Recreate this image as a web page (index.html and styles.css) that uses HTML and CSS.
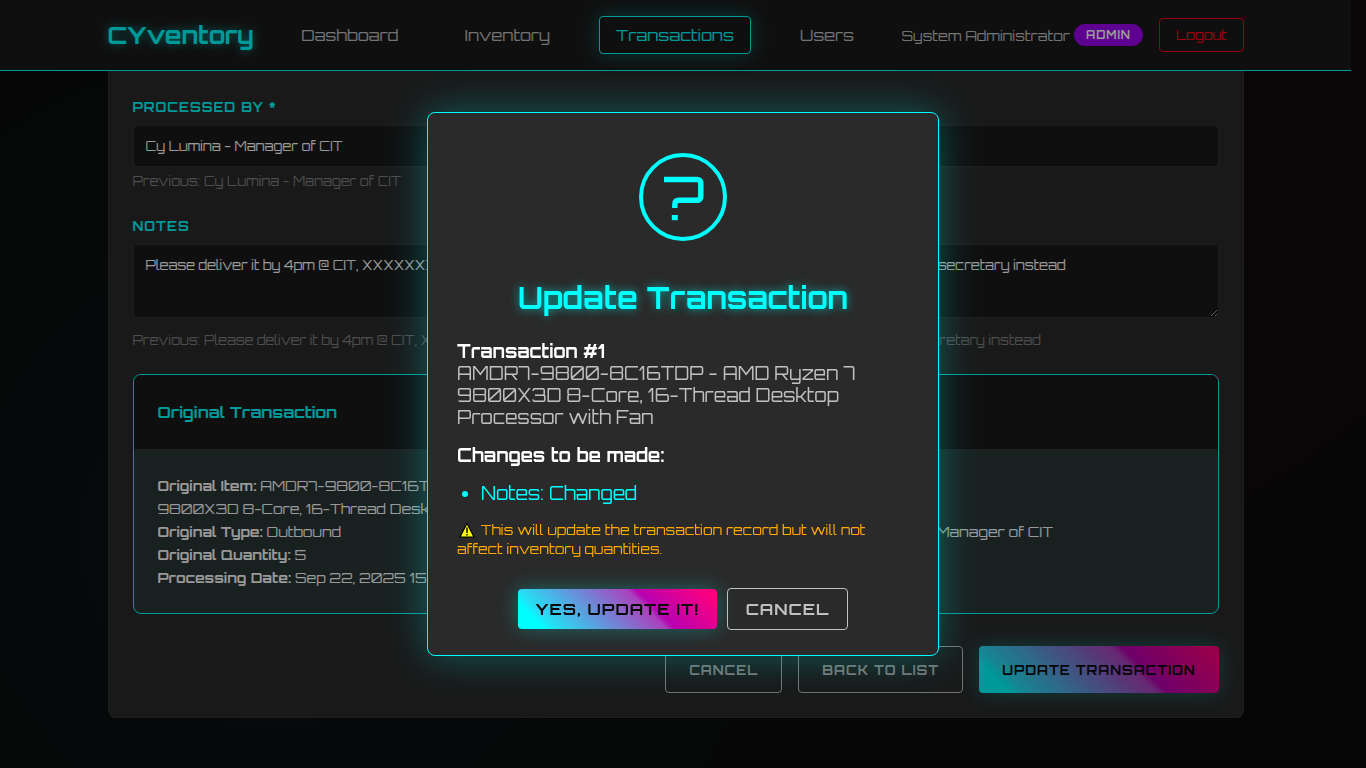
FILE: index.html
```html
<!DOCTYPE html>
<html lang="en">
<head>
<meta charset="utf-8">
<title>CYventory - Update Transaction</title>
<link rel="stylesheet" href="styles.css">
</head>
<body>
<header class="topbar">
  <div class="topbar-inner">
    <a class="logo" href="#">CYventory</a>
    <nav class="nav">
      <a class="nav-link" href="#">Dashboard</a>
      <a class="nav-link" href="#">Inventory</a>
      <a class="nav-link active" href="#">Transactions</a>
      <a class="nav-link" href="#">Users</a>
    </nav>
    <div class="user">
      <div class="user-info">System Administrator <span class="badge">ADMIN</span></div>
      <button class="logout" type="button">Logout</button>
    </div>
  </div>
</header>

<main class="page">
  <form class="card">
    <div class="field">
      <label class="label" for="processed">PROCESSED BY *</label>
      <input class="control" id="processed" type="text" value="Cy Lumina - Manager of CIT">
      <small class="previous">Previous: Cy Lumina - Manager of CIT</small>
    </div>
    <div class="field">
      <label class="label" for="notes">NOTES</label>
      <textarea class="control notes" id="notes">Please deliver it by 4pm @ CIT, XXXXXXXXXXXXXXX building, if I am not there, please give it to the staff or to my secretary instead</textarea>
      <small class="previous">Previous: Please deliver it by 4pm @ CIT, XXXXXXXXXXXX building, if I am not there, give it to the staff or to my secretary instead</small>
    </div>
    <section class="original">
      <h2 class="original-title">Original Transaction</h2>
      <div class="original-body">
        <div>
          <strong>Original Item:</strong> AMDR7-9800-8C16TDP - AMD Ryzen 7<br>
          9800X3D 8-Core, 16-Thread Desktop Processor<br>
          <strong>Original Type:</strong> Outbound<br>
          <strong>Original Quantity:</strong> 5<br>
          <strong>Processing Date:</strong> Sep 22, 2025 15:30
        </div>
        <div>
          <strong>Stock Before:</strong> 25<br>
          <strong>Stock After:</strong> 20<br>
          <strong>Original Processor:</strong> Cy Lumina - Manager of CIT
        </div>
      </div>
    </section>
    <div class="actions">
      <button class="btn btn-outline" type="button">CANCEL</button>
      <button class="btn btn-outline" type="button">BACK TO LIST</button>
      <button class="btn btn-gradient" type="button">UPDATE TRANSACTION</button>
    </div>
  </form>
</main>

<div class="backdrop">
  <div class="modal" role="dialog" aria-modal="true" aria-labelledby="modal-title">
    <svg class="modal-icon" viewBox="0 0 88 88" aria-hidden="true" fill="none" stroke="currentColor">
      <circle cx="44" cy="44" r="42" stroke-width="4"/>
      <path d="M25 26.5H57.7Q61.8 26.5 61.8 30.6V43.2Q61.8 47.3 57.7 47.3H40Q35.8 47.3 35.8 51.4V55" stroke-width="5.4"/>
      <path d="M35.8 62V67.2" stroke-width="6"/>
    </svg>
    <h1 class="modal-title" id="modal-title">Update Transaction</h1>
    <div class="modal-text">
      <p><strong>Transaction #1</strong><br>AMDR7-9800-8C16TDP - AMD Ryzen 7<br>9800X3D 8-Core, 16-Thread Desktop<br>Processor with Fan</p>
      <p><strong>Changes to be made:</strong></p>
      <ul class="changes"><li>Notes: Changed</li></ul>
      <p class="warning"><svg class="warning-icon" viewBox="0 0 18 16" aria-hidden="true"><path d="M9 1.5L16 15H2Z" fill="#ff0" stroke="#000" stroke-width="1.2"/><path d="M9 5.5V11M9 12V13.6" stroke="#000" stroke-width="1.4"/></svg> This will update the transaction record but will not<br>affect inventory quantities.</p>
    </div>
    <div class="modal-actions">
      <button class="modal-btn confirm" type="button">YES, UPDATE IT!</button>
      <button class="modal-btn dismiss" type="button">CANCEL</button>
    </div>
  </div>
</div>
</body>
</html>
```
FILE: styles.css
```css
* {
  box-sizing: border-box;
}

html {
  background: #0a0a0a;
}

body {
  margin: 0;
  padding-right: 15px;
  min-height: 100vh;
  overflow: hidden;
  font-family: Orbitron, "DejaVu Sans", sans-serif;
  font-size: 14px;
  color: #fff;
  background:
    radial-gradient(circle at 20% 70%, rgba(0, 255, 255, 0.04), transparent 50%),
    radial-gradient(circle at 80% 20%, rgba(255, 0, 80, 0.04), transparent 50%),
    #0a0a0a;
}

button {
  font-family: inherit;
  cursor: pointer;
}

.topbar {
  background: #1a1a1a;
  border-bottom: 1px solid #0ff;
}

.topbar-inner {
  display: flex;
  align-items: center;
  justify-content: space-between;
  max-width: 1200px;
  height: 70px;
  margin: 0 auto;
  padding: 0 32px;
  white-space: nowrap;
}

.logo {
  font-size: 24px;
  font-weight: 700;
  color: #0ff;
  text-decoration: none;
  text-shadow: 0 0 10px rgba(0, 255, 255, 0.6);
}

.nav {
  display: flex;
  gap: 32px;
}

.nav-link {
  padding: 8px 16px;
  border: 1px solid transparent;
  border-radius: 4px;
  font-size: 16px;
  line-height: 20px;
  color: #c0c0c0;
  text-decoration: none;
}

.nav-link.active {
  color: #0ff;
  border-color: #0ff;
  box-shadow: 0 0 20px rgba(0, 255, 255, 0.3);
}

.user {
  display: flex;
  align-items: center;
  gap: 16px;
  color: #c0c0c0;
}

.user-info {
  display: flex;
  align-items: center;
  gap: 4px;
}

.badge {
  padding: 4px 12px;
  border-radius: 12px;
  background: #9d00f0;
  color: #fff;
  font-size: 11px;
  font-weight: 700;
  line-height: 14px;
  letter-spacing: 1px;
}

.logout {
  height: 34px;
  padding: 0 16px;
  border: 1px solid #ff0018;
  border-radius: 4px;
  background: transparent;
  color: #ff0018;
  font-size: 13px;
}

.page {
  max-width: 1200px;
  margin: 0 auto;
  padding: 0 32px;
}

.card {
  padding: 25px 24px 24px;
  border: 1px solid #333;
  border-top: 0;
  border-radius: 0 0 8px 8px;
  background: #2a2a2a;
}

.field {
  display: flex;
  flex-direction: column;
  margin-bottom: 24px;
}

.label {
  margin: 2px 0 9px;
  font-size: 13px;
  font-weight: 700;
  line-height: 18px;
  letter-spacing: 1px;
  color: #0ff;
}

.control {
  width: 100%;
  height: 42px;
  padding: 12px;
  border: 1px solid #333;
  border-radius: 4px;
  background: #1a1a1a;
  color: #fff;
  font-family: inherit;
  font-size: 13px;
  line-height: 16px;
}

.notes {
  height: 74px;
  margin-bottom: 8px;
  resize: vertical;
}

.previous {
  padding-top: 5px;
  font-size: 13px;
  line-height: 19px;
  color: #808080;
}

.original {
  overflow: hidden;
  border: 1px solid #0ff;
  border-radius: 8px;
  background: #2a3636;
}

.original-title {
  margin: 0;
  padding: 24px;
  border-bottom: 1px solid #333;
  background: #1a1a1a;
  color: #0ff;
  font-size: 16px;
  font-weight: 700;
  line-height: 26px;
}

.original-body {
  display: grid;
  grid-template-columns: 1fr 1fr;
  gap: 24px;
  padding: 24px;
  line-height: 23px;
  white-space: nowrap;
}

.actions {
  display: flex;
  justify-content: flex-end;
  gap: 16px;
  margin-top: 32px;
}

.btn {
  height: 47px;
  padding: 0 23px;
  border: 1px solid #c0c0c0;
  border-radius: 4px;
  background: transparent;
  color: #c0c0c0;
  font-size: 13px;
  font-weight: 700;
  letter-spacing: 1px;
}

.btn-gradient,
.confirm {
  border: 0;
  color: #0a0a0a;
  background: linear-gradient(45deg, #0ff 11%, #25dff5 16%, #ab42bd 62%, #b800b0 66%, #ff007c 96%);
  box-shadow: 0 0 20px rgba(0, 255, 255, 0.3);
}

.backdrop {
  position: fixed;
  inset: 0;
  display: grid;
  place-items: center;
  background: rgba(0, 0, 0, 0.4);
}

.modal {
  display: flex;
  flex-direction: column;
  align-items: center;
  width: 512px;
  padding: 40px 29px 25px;
  border: 1px solid #0ff;
  border-radius: 8px;
  background: #2a2a2a;
  box-shadow: 0 0 40px rgba(0, 255, 255, 0.3);
}

.modal-icon {
  width: 88px;
  height: 88px;
  color: #0ff;
}

.modal-title {
  margin: 37px 0 22px;
  color: #0ff;
  font-size: 30px;
  font-weight: 700;
  line-height: 40px;
  text-shadow: 0 0 10px rgba(0, 255, 255, 0.6);
}

.modal-text {
  align-self: stretch;
  color: #c0c0c0;
  font-size: 18px;
  line-height: 22px;
  white-space: nowrap;
}

.modal-text p {
  margin: 0 0 16px;
}

.modal-text strong {
  color: #fff;
}

.changes {
  margin: 0 0 16px;
  padding-left: 24px;
  color: #0ff;
}

.modal-text .warning {
  margin: 0;
  color: #ffaa00;
  font-size: 14px;
  line-height: 19px;
}

.warning-icon {
  width: 20px;
  height: 16px;
  vertical-align: -3px;
}

.modal-actions {
  display: flex;
  align-items: center;
  gap: 10px;
  margin-top: 30px;
}

.modal-btn {
  height: 40px;
  padding: 0 18px;
  border-radius: 4px;
  font-size: 16px;
  font-weight: 700;
  letter-spacing: 1px;
}

.dismiss {
  height: 42px;
  border: 1px solid #c0c0c0;
  background: transparent;
  color: #c0c0c0;
}
```
